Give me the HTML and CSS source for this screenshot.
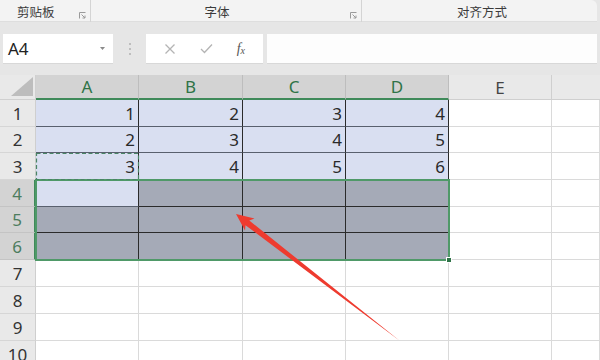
FILE: index.html
```html
<!DOCTYPE html>
<html lang="zh">
<head>
<meta charset="utf-8">
<link rel="stylesheet" href="styles.css">
</head>
<body>
<div class="app">
  <div class="ribbon">
    <div class="grp g1"><span class="lbl">剪贴板</span>
      <svg class="launch" width="7" height="7" viewBox="0 0 7 7"><path d="M0.5 6.5V0.5H6.5" fill="none" stroke="#9a9a9a"/><path d="M2.5 2.5L6 6M6 3.5V6H3.5" fill="none" stroke="#9a9a9a"/></svg>
    </div>
    <div class="grp g2"><span class="lbl">字体</span>
      <svg class="launch" width="7" height="7" viewBox="0 0 7 7"><path d="M0.5 6.5V0.5H6.5" fill="none" stroke="#9a9a9a"/><path d="M2.5 2.5L6 6M6 3.5V6H3.5" fill="none" stroke="#9a9a9a"/></svg>
    </div>
    <div class="grp g3"><span class="lbl">对齐方式</span></div>
  </div>
  <div class="fbar">
    <div class="namebox"><span class="ref">A4</span>
      <svg class="dd" width="5" height="3" viewBox="0 0 5 3"><path d="M0 0H5L2.5 3Z" fill="#8a8a8a"/></svg>
    </div>
    <div class="dots"><i></i><i></i><i></i></div>
    <div class="fbtns">
      <svg width="12" height="12" viewBox="0 0 12 12"><path d="M1.5 1.5L10.5 10.5M10.5 1.5L1.5 10.5" stroke="#b4b4b4" stroke-width="1.3"/></svg>
      <svg width="13" height="11" viewBox="0 0 13 11"><path d="M1 6L4.5 9.5L12 1.5" fill="none" stroke="#b4b4b4" stroke-width="1.3"/></svg>
      <span class="fx">f<sub>x</sub></span>
    </div>
    <div class="finput"></div>
  </div>
  <div class="sheet">
    <div class="corner"><svg width="22" height="19" viewBox="0 0 22 19"><path d="M22 0V19H0Z" fill="#bdbdbd"/></svg></div>
    <div class="ch sel">A</div><div class="ch sel">B</div><div class="ch sel">C</div><div class="ch sel">D</div><div class="ch">E</div><div class="ch last"></div>

    <div class="rh">1</div><div class="c lav dk">1</div><div class="c lav dk">2</div><div class="c lav dk">3</div><div class="c lav dk">4</div><div class="c"></div><div class="c"></div>
    <div class="rh">2</div><div class="c lav dk">2</div><div class="c lav dk">3</div><div class="c lav dk">4</div><div class="c lav dk">5</div><div class="c"></div><div class="c"></div>
    <div class="rh">3</div><div class="c lav dk">3</div><div class="c lav dk">4</div><div class="c lav dk">5</div><div class="c lav dk">6</div><div class="c"></div><div class="c"></div>
    <div class="rh sel">4</div><div class="c lav dk nob"></div><div class="c gry dk"></div><div class="c gry dk"></div><div class="c gry dk"></div><div class="c"></div><div class="c"></div>
    <div class="rh sel">5</div><div class="c gry dk"></div><div class="c gry dk"></div><div class="c gry dk"></div><div class="c gry dk"></div><div class="c"></div><div class="c"></div>
    <div class="rh sel">6</div><div class="c gry dk"></div><div class="c gry dk"></div><div class="c gry dk"></div><div class="c gry dk"></div><div class="c"></div><div class="c"></div>
    <div class="rh">7</div><div class="c"></div><div class="c"></div><div class="c"></div><div class="c"></div><div class="c"></div><div class="c"></div>
    <div class="rh">8</div><div class="c"></div><div class="c"></div><div class="c"></div><div class="c"></div><div class="c"></div><div class="c"></div>
    <div class="rh">9</div><div class="c"></div><div class="c"></div><div class="c"></div><div class="c"></div><div class="c"></div><div class="c"></div>
    <div class="rh">10</div><div class="c"></div><div class="c"></div><div class="c"></div><div class="c"></div><div class="c"></div><div class="c"></div>

    <div class="selbox"></div>
    <div class="handle"></div>
    <svg class="marquee" width="105" height="29" viewBox="0 0 105 29"><rect x="1.5" y="1.5" width="102" height="26" fill="none" stroke="#4a8566" stroke-width="1.2" stroke-dasharray="4 2.5"/></svg>
  </div>
  <svg class="arrow" width="600" height="360" viewBox="0 0 600 360">
    <polygon points="236,214 254.5,218.5 249.3,220.6 400,341 245.5,225.2 245,230.5" fill="#ee3b2f"/>
  </svg>
</div>
</body>
</html>
```
FILE: styles.css
```css
* { box-sizing: border-box; }
html, body { margin: 0; padding: 0; }
body {
  width: 600px;
  height: 360px;
  overflow: hidden;
  background: #e6e6e6;
  font-family: "Noto Sans", "Noto Sans CJK SC", sans-serif;
  color: #333;
}
.app { position: relative; width: 600px; height: 360px; }

.ribbon {
  display: flex;
  height: 22px;
  width: 597px;
  background: #f3f3f3;
  border-top-right-radius: 6px;
  border-bottom: 1px solid #dedede;
}
.grp {
  position: relative;
  display: flex;
  align-items: center;
  height: 22px;
  font-family: "Noto Sans CJK SC", sans-serif;
  font-size: 12.5px;
  color: #3b3b3b;
}
.g1 { width: 91px; padding-left: 17px; border-right: 1px solid #d4d4d4; }
.g2 { width: 271px; justify-content: center; padding-right: 18px; border-right: 1px solid #d4d4d4; }
.g3 { flex: 1; justify-content: center; padding-left: 5px; }
.launch { position: absolute; right: 4px; top: 12px; }
.g1 .launch { right: 4px; }
.g2 .launch { right: 4px; }

.fbar {
  display: flex;
  align-items: center;
  height: 41px;
  padding: 12px 3px 0 3px;
  width: 600px;
}
.namebox {
  width: 110px;
  height: 29px;
  background: #fff;
  display: flex;
  align-items: center;
  justify-content: space-between;
  padding: 0 8px 0 5px;
  box-shadow: 0 1px 0 #d8d8d8;
}
.ref { font-size: 17px; color: #222; }
.dots {
  width: 33px;
  display: flex;
  flex-direction: column;
  align-items: center;
  gap: 3px;
}
.dots i { width: 2px; height: 2px; background: #b0b0b0; border-radius: 1px; }
.fbtns {
  width: 117px;
  height: 29px;
  background: #fff;
  display: flex;
  align-items: center;
  justify-content: space-around;
  padding: 0 6px 0 6px;
  box-shadow: 0 1px 0 #d8d8d8;
}
.fx {
  font-family: "Liberation Serif", serif;
  font-style: italic;
  font-size: 14px;
  color: #555;
}
.fx sub { font-size: 10px; vertical-align: -1px; }
.finput {
  flex: 1;
  margin-left: 4px;
  height: 29px;
  background: #fdfdfd;
  box-shadow: 0 1px 0 #d8d8d8;
  margin-right: 0;
}

.sheet {
  position: relative;
  margin-top: 12px;
  display: grid;
  grid-template-columns: 36px 103px 104px 103px 103px 103px 48px;
  grid-template-rows: 25px 27px 26px 27px 27px 26px 27px 27px 27px 27px 27px;
  background: #fff;
  font-size: 17px;
}
.corner {
  background: #e9e9e9;
  border-right: 1px solid #d0d0d0;
  border-bottom: 1px solid #d0d0d0;
  display: flex;
  align-items: flex-end;
  justify-content: flex-end;
  padding: 0 2px 3px 0;
}
.ch {
  background: #e9e9e9;
  border-right: 1px solid #cfcfcf;
  border-bottom: 1px solid #cfcfcf;
  display: flex;
  align-items: center;
  justify-content: center;
  color: #444;
  line-height: 1;
}
.ch.sel {
  background: #d3d3d3;
  color: #2f7347;
  border-bottom: 2px solid #3f8a5a;
  border-right-color: #bdbdbd;
}
.ch.last { border-right: none; }
.rh {
  background: #e9e9e9;
  border-right: 1px solid #cfcfcf;
  border-bottom: 1px solid #d6d6d6;
  display: flex;
  align-items: center;
  justify-content: center;
  color: #333;
  line-height: 1;
}
.rh.sel {
  background: #d3d3d3;
  color: #4d7d5e;
  border-right: 2px solid #3f8a5a;
  border-bottom-color: #c4c4c4;
}
.c {
  background: #fff;
  border-right: 1px solid #dadada;
  border-bottom: 1px solid #dadada;
  display: flex;
  align-items: center;
  justify-content: flex-end;
  padding-right: 3px;
  line-height: 1;
  color: #2a2a2a;
}
.c.lav { background: #d9dff1; }
.c.gry { background: #a5aab7; }
.c.dk { border-right-color: #2b2b2b; border-bottom-color: #2b2b2b; }
.c.dk.lav { border-bottom-color: #59606e; }
.c.nob { border-bottom-color: #a5aab7; }

.selbox {
  position: absolute;
  left: 35px;
  top: 104px;
  width: 415px;
  height: 82px;
  border: 2px solid #4f9968;
  pointer-events: none;
}
.handle {
  position: absolute;
  left: 446px;
  top: 182px;
  width: 6px;
  height: 6px;
  background: #2f7347;
  border: 1px solid #fff;
}
.marquee {
  position: absolute;
  left: 35px;
  top: 77px;
}
.arrow {
  position: absolute;
  left: 0;
  top: 0;
  pointer-events: none;
}
```
